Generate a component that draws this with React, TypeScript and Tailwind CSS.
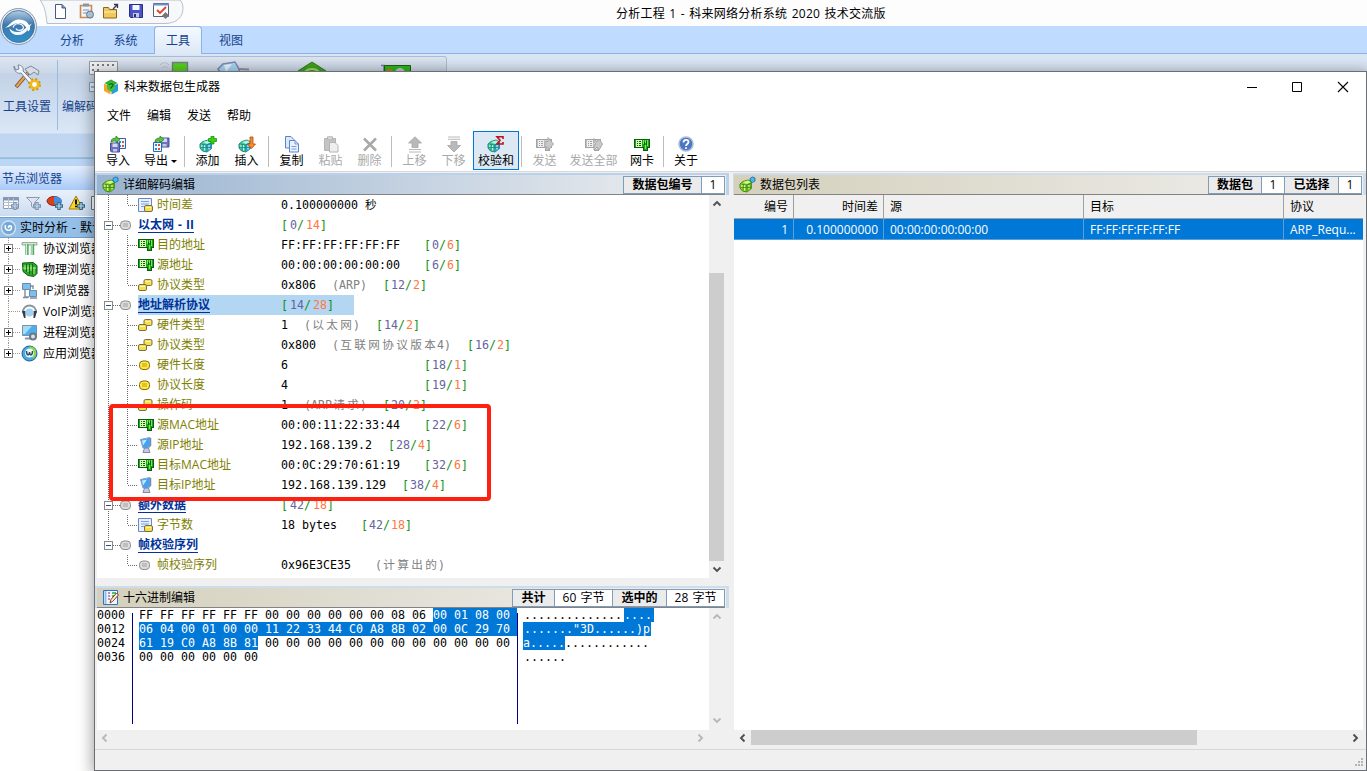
import React from "react";

const UI = "font-['Open_Sans','Noto_Sans_CJK_SC',sans-serif] [word-spacing:1px]";
const MONO = "font-['DejaVu_Sans_Mono','Noto_Sans_CJK_SC',monospace] [word-spacing:0px]";

/* ---------- small icons ---------- */

function Gem({ x = 0, y = 0, tone = "teal" }: { x?: number; y?: number; tone?: "teal" | "green" }) {
  const c =
    tone === "teal"
      ? ["#b4f5da", "#3fd0a0", "#2f9ad8", "#157a78"]
      : ["#d2f88a", "#8cdc34", "#5db01c", "#3a7a0c"];
  return (
    <g transform={`translate(${x} ${y})`} strokeWidth=".9" stroke={c[3]} strokeLinejoin="round">
      <path d="M3 1.500 8 0l3.500 2v6.500L7 12 2.500 11 0 8V4z" fill={c[1]} />
      <path d="M7 4.500 11.500 2v6.500L7 12z" fill={c[2]} stroke="none" />
      <path d="M3 2 8 .600l3 1.600L7 4z" fill={c[0]} stroke="none" />
      <path d="M2 5v3M4.500 5v5.500M9 5v4.500" stroke={c[0]} strokeWidth="1.300" fill="none" />
      <path d="M3.200 4v6.500M6.300 4.500V11.500M.5 7.500h10.500M1.500 4l5 1 4.500-2" fill="none" strokeWidth=".7" />
    </g>
  );
}

function Card({ gray = false, x = 0, y = 0 }: { gray?: boolean; x?: number; y?: number }) {
  const a = gray ? "#c0c0c0" : "#23a51a";
  const b = gray ? "#a2a2a2" : "#0b5c12";
  const l = gray ? "#efefef" : "#d4ffb0";
  return (
    <g transform={`translate(${x} ${y})`} shapeRendering="crispEdges">
      <path d="M0 0h16v9h-2v3H9V9H0z" fill={b} />
      <path d="M1 1h14v7h-2v3h-3V8H1z" fill={a} />
      <path d="M2 1h6v7H2z" fill={l} />
      <path d="M3 2h1v1H3zM5 2h2v1H5zM3 4h1v1H3zM5 4h2v1H5zM3 6h1v1H3zM5 6h2v1H5z" fill={b} />
      <path d="M9 1h1v4H9zM11 1h1v3h-1zM13 1h1v6h-1zM11 6h1v4h-1z" fill={gray ? "#e4e4e4" : "#6cf048"} />
      <path d="M10 3h1v3h-1zM12 2h1v4h-1z" fill={b} />
    </g>
  );
}

function Disk({ x, y }: { x: number; y: number }) {
  return (
    <g transform={`translate(${x} ${y})`}>
      <path d="M.5.500h9v9h-8l-1-1z" fill="#6c72c0" stroke="#4a4e98" />
      <path d="M2.500 1h5v3.500h-5z" fill="#d4d8f4" />
      <path d="M3 6.500h4V9H3z" fill="#c4c8e8" />
    </g>
  );
}

function ToolIcon({ kind }: { kind: string }) {
  return (
    <svg width="18" height="17" viewBox="0 0 18 17" fill="none" className="block">
      {kind === "import" && (
        <g>
          <path d="M8.500 2.500h8v10h-8z" fill="#f2f8ff" stroke="#2a64b4" />
          <path d="M10 5h2v2h-2zM10 9h2v2h-2z" fill="#2a8de0" />
          <path d="M13 5h2v2h-2zM13 9h2v2h-2z" fill="#e45a1c" />
          <Disk x={1} y={6.500} />
          <path d="M2 6c0-3 2-4 5-4V0l4 3.500L7 7V5C5 5 4 5 2 6z" fill="#5cc440" stroke="#1b7a1b" strokeWidth=".7" />
        </g>
      )}
      {kind === "export" && (
        <g>
          <Disk x={7.500} y={1.500} />
          <path d="M1.500 6.500h8v9h-8z" fill="#f2f8ff" stroke="#1e6cc0" />
          <path d="M3 8h2v2H3zM3 12h2v2H3z" fill="#2a8de0" />
          <path d="M6 8h2v2H6zM6 12h2v2H6z" fill="#e0501c" />
          <path d="M3 6c0-3 2-4 5-4V0l4 3.500L8 7V5C6 5 5 5 3 6z" fill="#5cc440" stroke="#1b7a1b" strokeWidth=".7" />
        </g>
      )}
      {kind === "add" && (
        <g>
          <Gem x={1} y={4} />
          <path d="M12 0h3v2.500h2.500v3H15V8h-3V5.500H9.500v-3H12z" fill="#35d018" stroke="#128a08" strokeWidth=".7" />
        </g>
      )}
      {kind === "insert" && (
        <g>
          <Gem x={1} y={4} />
          <path d="M12 1h3v7h2.500L13.500 12.500 9.500 8H12z" fill="#f98a24" stroke="#b8480c" strokeWidth=".8" />
        </g>
      )}
      {kind === "copy" && (
        <g stroke="#5a84cc" strokeLinejoin="round">
          <path d="M2.500.500H8l3 3v8.500H2.500z" fill="#dbe8fb" />
          <path d="M6.500 4.500H12l3.500 3.500v8h-9z" fill="#e9f2ff" />
          <path d="M12 4.500V8h3.500M8.500 10.500h5M8.500 13h5" strokeWidth=".8" />
        </g>
      )}
      {kind === "paste" && (
        <g stroke="#b4b4b4">
          <path d="M2.500 2.500h11v12h-11z" fill="#c4c4c4" />
          <path d="M5.500.800h5v3h-5z" fill="#dadada" />
          <path d="M7.500 6.500H13l3 3v6.500H7.500z" fill="#efefef" />
        </g>
      )}
      {kind === "delete" && <path d="m3 2.500 12 12M15 2.500l-12 12" stroke="#a9a9a9" strokeWidth="2.600" />}
      {kind === "up" && (
        <g fill="#b9b9b9" stroke="#a6a6a6" strokeWidth=".8">
          <path d="M9 .8 15.500 7h-3.500v4.500H6V7H2.500z" />
          <path d="M3 13.500h12M3 16h12" />
        </g>
      )}
      {kind === "down" && (
        <g fill="#b9b9b9" stroke="#a6a6a6" strokeWidth=".8">
          <path d="M9 16 15.500 9.500h-3.500V5.500H6v4H2.500z" />
          <path d="M3 1h12M3 3.300h12" />
        </g>
      )}
      {kind === "sum" && (
        <g>
          <Gem x={1} y={4} />
          <path d="M16 3V.800h-6L13 4.300 10 8h6V6" stroke="#c01020" strokeWidth="1.600" />
        </g>
      )}
      {kind === "send" && (
        <g>
          <Card gray y={3} />
          <path d="M9 5.500h3v-4L17.500 8 12 14.500V11H9z" fill="#c9c9c9" stroke="#a8a8a8" />
        </g>
      )}
      {kind === "sendall" && (
        <g>
          <Card gray y={3} />
          <path d="M9 2.500 12 6l2-3 3.500 5-3.500 6-2-3-3 3V10l2-2-2-2z" fill="#c9c9c9" stroke="#a8a8a8" />
        </g>
      )}
      {kind === "card" && <Card x={1} y={3} />}
      {kind === "about" && (
        <g>
          <circle cx="9" cy="8" r="7" fill="#4a76c4" stroke="#aebcd8" strokeWidth="1.600" />
          <path d="M6.500 6.500C6.500 3 11.500 3 11.500 6c0 2-2.500 2-2.500 4M9 11.300V13" stroke="#fff" strokeWidth="1.800" />
        </g>
      )}
    </svg>
  );
}

/* ---------- toolbar ---------- */

function Tool({ kind, label, w, off = false, arrow = false }: { kind: string; label: string; w: string; off?: boolean; arrow?: boolean }) {
  return (
    <div className={`flex shrink-0 flex-col items-center pt-[4px] ${w}`}>
      <ToolIcon kind={kind} />
      <div className={`flex h-4 items-center whitespace-nowrap text-[12px] leading-4 ${off ? "text-[#a9a9a9]" : "text-black"}`}>
        {label}
        {arrow && <span className="ml-[3px] border-x-[3px] border-t-[3px] border-x-transparent border-t-black" />}
      </div>
    </div>
  );
}

function Sep({ m }: { m: string }) {
  return <div className={`mt-[4px] h-[31px] w-px shrink-0 bg-[#bcbcbc] ${m}`} />;
}

function Toolbar() {
  return (
    <div className="flex h-[40px] shrink-0 pl-[4px] pt-px">
      <Tool kind="import" label="导入" w="w-[38px]" />
      <Tool kind="export" label="导出" w="w-[47px]" arrow />
      <Sep m="" />
      <Tool kind="add" label="添加" w="w-[39px] ml-[3px]" />
      <Tool kind="insert" label="插入" w="w-[39px]" />
      <Sep m="ml-[2px]" />
      <Tool kind="copy" label="复制" w="w-[39px] ml-[3px]" />
      <Tool kind="paste" label="粘贴" w="w-[39px]" off />
      <Tool kind="delete" label="删除" w="w-[39px]" off />
      <Sep m="ml-[2px]" />
      <Tool kind="up" label="上移" w="w-[39px] ml-[3px]" off />
      <Tool kind="down" label="下移" w="w-[39px]" off />
      <div className="flex h-[39px] w-[46px] shrink-0 justify-center border border-[#0078d7] bg-[#dce9f5] -mt-px">
        <Tool kind="sum" label="校验和" w="w-[44px]" />
      </div>
      <Sep m="ml-[2px]" />
      <Tool kind="send" label="发送" w="w-[39px] ml-[3px]" off />
      <Tool kind="sendall" label="发送全部" w="w-[59px]" off />
      <Tool kind="card" label="网卡" w="w-[38px]" />
      <Sep m="ml-[2px]" />
      <Tool kind="about" label="关于" w="w-[40px] ml-[2px]" />
    </div>
  );
}

/* ---------- pane header ---------- */

function PacketGlyph() {
  return (
    <svg width="18" height="17" viewBox="0 0 18 17">
      <Gem x={1} y={4} tone="green" />
      <path d="m11 2.500 2.500-1.500 2.500 1v3L13.500 6.500 11 5z" fill="#48b8f0" stroke="#17649c" strokeWidth=".8" />
    </svg>
  );
}

function NoteGlyph() {
  return (
    <svg width="18" height="17" viewBox="0 0 18 17" fill="none">
      <path d="M1.500 1.500h14v14h-14z" fill="#f2f7ff" stroke="#2c74cc" />
      <path d="M3.500 2v13" stroke="#8dbcf4" strokeWidth="2" />
      <path d="M6 4h2M6 7h2M6 10h2" stroke="#7a2860" />
      <path d="M10 4h4M10 7h4" stroke="#1fae2e" strokeWidth="1.400" />
      <path d="m8 14 1-3.500L14.500 4l2 2-6 6.500z" fill="#fff3c8" stroke="#8a3418" />
    </svg>
  );
}

function Badges({ items }: { items: [string, string, string, string][] }) {
  return (
    <div className="flex h-[18px] border border-[#7f9db9] bg-[#7f9db9] gap-px text-[12px] leading-[16px] text-black">
      {items.map(([k, kw, v, vw]) => (
        <React.Fragment key={k}>
          <div className={`bg-[#ebebeb] text-center font-bold ${kw}`}>{k}</div>
          <div className={`bg-white text-center ${vw}`}>{v}</div>
        </React.Fragment>
      ))}
    </div>
  );
}

function PaneHeader({ title, grad, edge, icon, badges }: { title: string; grad: string; edge: string; icon: React.ReactNode; badges: [string, string, string, string][] }) {
  return (
    <div className={`flex h-[22px] shrink-0 flex-col border-r-[3px] border-t-2 pr-px ${edge}`}>
      <div className={`flex h-[20px] items-center border-b border-[#848284] pl-[5px] ${grad}`}>
        {icon}
        <span className="ml-[3px] flex-1 text-[12px] leading-[18px] text-black">{title}</span>
        <Badges items={badges} />
      </div>
    </div>
  );
}

/* ---------- decode tree ---------- */

type Row = {
  group?: boolean;
  last?: boolean;
  noRoot?: boolean;
  icon: "note" | "gray" | "card" | "pair" | "one" | "host";
  label: string;
  value?: string;
  noteX?: number;
  note?: string;
  pairX?: number;
  pair?: [string, string];
  sel?: boolean;
};

const rows: Row[] = [
  { icon: "note", label: "时间差", value: "0.100000000 秒", last: true },
  { group: true, icon: "gray", label: "以太网 - II", pairX: 0, pair: ["0", "14"] },
  { icon: "card", label: "目的地址", value: "FF:FF:FF:FF:FF:FF", pairX: 143, pair: ["0", "6"] },
  { icon: "card", label: "源地址", value: "00:00:00:00:00:00", pairX: 143, pair: ["6", "6"] },
  { icon: "pair", label: "协议类型", value: "0x806", noteX: 51, note: "(ARP)", pairX: 102, pair: ["12", "2"], last: true },
  { group: true, icon: "gray", label: "地址解析协议", pairX: 0, pair: ["14", "28"], sel: true },
  { icon: "pair", label: "硬件类型", value: "1", noteX: 23, note: "(以太网)", pairX: 95, pair: ["14", "2"] },
  { icon: "pair", label: "协议类型", value: "0x800", noteX: 51, note: "(互联网协议版本4)", pairX: 186, pair: ["16", "2"] },
  { icon: "one", label: "硬件长度", value: "6", pairX: 143, pair: ["18", "1"] },
  { icon: "one", label: "协议长度", value: "4", pairX: 143, pair: ["19", "1"] },
  { icon: "pair", label: "操作码", value: "1", noteX: 23, note: "(ARP请求)", pairX: 102, pair: ["20", "2"] },
  { icon: "card", label: "源MAC地址", value: "00:00:11:22:33:44", pairX: 143, pair: ["22", "6"] },
  { icon: "host", label: "源IP地址", value: "192.168.139.2", pairX: 107, pair: ["28", "4"] },
  { icon: "card", label: "目标MAC地址", value: "00:0C:29:70:61:19", pairX: 143, pair: ["32", "6"] },
  { icon: "host", label: "目标IP地址", value: "192.168.139.129", pairX: 121, pair: ["38", "4"], last: true },
  { group: true, icon: "gray", label: "额外数据", pairX: 0, pair: ["42", "18"] },
  { icon: "note", label: "字节数", value: "18 bytes", pairX: 80, pair: ["42", "18"], last: true },
  { group: true, icon: "gray", label: "帧校验序列", noRoot: true },
  { icon: "gray", label: "帧校验序列", value: "0x96E3CE35", noteX: 94, note: "(计算出的)", last: true, noRoot: true },
];

function Pill({ x, y, gray = false }: { x: number; y: number; gray?: boolean }) {
  return (
    <g transform={`translate(${x} ${y})`}>
      <rect x=".5" y=".5" width="10" height="8.500" rx="3.500" fill={gray ? "#dcdcdc" : "#ffe84a"} stroke={gray ? "#8f8f8f" : "#8a6d00"} />
      <path d="M3 3.500h5M3 5.500h5" stroke={gray ? "#9a9a9a" : "#b89200"} strokeWidth=".9" />
    </g>
  );
}

function MiniPill({ x, y }: { x: number; y: number }) {
  return (
    <g transform={`translate(${x} ${y})`}>
      <rect x=".5" y=".5" width="8" height="6" rx="1.500" fill="#f8de4a" stroke="#77704c" />
      <path d="M2 2.500h5" stroke="#fff6a8" />
    </g>
  );
}

function Branch({ r }: { r: Row }) {
  const dot = { stroke: "#6a6a6a", strokeDasharray: "1 1", fill: "none" };
  return (
    <svg width={r.group ? 41 : 60} height="20" viewBox={r.group ? "0 0 41 20" : "0 0 60 20"} className="block shrink-0">
      {!(r.noRoot && !r.group) && <path d={r.noRoot ? "M11.500 0v10" : "M11.500 0v20"} {...dot} />}
      {r.group ? (
        <g>
          <path d="M16 10.500h8" {...dot} />
          <rect x="7.500" y="6.500" width="8" height="8" fill="#fff" stroke="#8a8a8a" />
          <path d="M9 10.500h5" stroke="#2c4a8a" />
          <Pill x={23} y={5.500} gray />
        </g>
      ) : (
        <g>
          <path d={r.last ? "M30.500 0v10" : "M30.500 0v20"} {...dot} />
          <path d="M31 10.500h10" {...dot} />
          {r.icon === "gray" && <Pill x={42} y={5.500} gray />}
          {r.icon === "one" && <Pill x={42} y={5.500} />}
          {r.icon === "card" && <Card x={41} y={4} />}
          {r.icon === "pair" && (
            <g>
              <MiniPill x={46.500} y={4} />
              <MiniPill x={41} y={9} />
            </g>
          )}
          {r.icon === "note" && (
            <g>
              <path d="M41.500 3.500h13v13h-13z" fill="#e8f1ff" stroke="#6a86c4" />
              <path d="M44 6.500h8M44 9h8M44 11.500h5" stroke="#7aa0dc" />
              <MiniPill x={47} y={10} />
            </g>
          )}
          {r.icon === "host" && (
            <g>
              <path d="m43.500 4.500 9.500-2v9.500l-7 1z" fill="#3fa4f8" stroke="#8c9cb8" />
              <path d="m45 5.500 5-1-4 6z" fill="#c4e6ff" />
              <path d="M53.500 3v8" stroke="#7c88b0" strokeWidth="1.500" />
              <path d="M47.500 13h4l1.500 4.500h-7z" fill="#c4cae4" stroke="#6b7298" strokeWidth=".8" />
            </g>
          )}
        </g>
      )}
    </svg>
  );
}

function Pair({ p, group }: { p: [string, string]; group?: boolean }) {
  const g = group ? "ml-[2px]" : "ml-[1px]";
  return (
    <span className="text-[#109010]">
      [<span className={`text-[#6464a0] ${g}`}>{p[0]}</span>/<span className={`text-[#ff7840] ${g}`}>{p[1]}</span>]
    </span>
  );
}

function DecodeRow({ r }: { r: Row }) {
  const before = r.note ? r.noteX! : r.pairX ?? 110;
  return (
    <div className="flex h-[20px] shrink-0">
      <Branch r={r} />
      <div className={`flex h-[20px] items-center ${r.sel ? "w-[216px] bg-[#b3d7f3]" : ""}`}>
        <div className={`shrink-0 text-[12px] leading-[16px] ${r.group ? "w-[143px] font-bold text-[#003399]" : "w-[124px] text-[#808000]"}`}>
          <span className={r.group ? "inline-block border-b border-[#003399] leading-[15px]" : ""}>{r.label}</span>
        </div>
        <div className={`flex whitespace-pre text-[11.63px] leading-[20px] ${MONO}`}>
          <span className="shrink-0 text-black" style={{ width: before }}>
            {r.value}
          </span>
          {r.note && (
            <span className="shrink-0 text-[#808080]" style={{ width: (r.pairX ?? 180) - before }}>
              {Array.from(r.note).map((ch, i) => (
                <span key={i} className={ch.charCodeAt(0) > 255 ? "inline-block w-[14px] text-center" : ""}>
                  {ch}
                </span>
              ))}
            </span>
          )}
          {r.pair && <Pair p={r.pair} group={r.group} />}
        </div>
      </div>
    </div>
  );
}

/* ---------- scroll arrows ---------- */

function Chevron({ d, c = "#505050" }: { d: "up" | "down" | "left" | "right"; c?: string }) {
  const p = { up: "m4.500 9.500 3.500-3.500L11.500 9.500", down: "m4.500 6.500 3.500 3.500 3.500-3.500", left: "M9.500 4.500 6 8l3.500 3.500", right: "m6.500 4.500 3.500 3.500-3.500 3.500" };
  return (
    <svg width="16" height="16" viewBox="0 0 16 16" className="block shrink-0">
      <path d={p[d]} fill="none" stroke={c} strokeWidth="1.900" />
    </svg>
  );
}

/* ---------- hex editor ---------- */

const Z = (n: number) => Array(n).fill("00").join(" ");

function Sel({ children, m = "" }: { children: React.ReactNode; m?: string }) {
  return <span className={`inline-block h-[14px] bg-[#0078d7] text-white ${m}`}>{children}</span>;
}

function HexPane() {
  return (
    <div className="flex h-[122px] shrink-0 bg-[#f0f0f0]">
      <div className={`flex flex-1 bg-white text-[11.63px] leading-[14px] whitespace-pre text-black ${MONO}`}>
        <div className="w-[35px] shrink-0">
          {["0000", "0012", "0024", "0036"].map((o) => (
            <div key={o}>{o}</div>
          ))}
        </div>
        <div className="mt-[5px] h-[111px] w-px shrink-0 bg-[#000080]" />
        <div className="ml-[5px] w-[379px] shrink-0 pl-px">
          <div className="h-[14px]">
            {"FF FF FF FF FF FF " + Z(6) + " 08 06 "}
            <Sel>{"00 01 08 00 "}</Sel>
          </div>
          <div className="h-[14px]">
            <Sel>{"06 04 00 01 00 00 11 22 33 44 C0 A8 8B 02 00 0C 29 70 "}</Sel>
          </div>
          <div className="h-[14px]">
            <Sel>61 19 C0 A8 8B 81</Sel> {Z(12)}
          </div>
          <div className="h-[14px]">{Z(6)}</div>
        </div>
        <div className="mt-[5px] h-[111px] w-px shrink-0 bg-[#000080]" />
        <div className="ml-[5px]">
          <div className="h-[14px] pl-[1px]">
            ..............<Sel m="ml-[2px] pr-[2px]">....</Sel>
          </div>
          <div className="h-[14px]">
            <Sel m="pl-px pr-px">......."3D......)p</Sel>
          </div>
          <div className="h-[14px]">
            <Sel>a.....</Sel>............
          </div>
          <div className="h-[14px] pl-px">......</div>
        </div>
      </div>
      <div className="flex w-[19px] shrink-0 flex-col justify-between pb-[2px] pt-px">
        <Chevron d="up" c="#b8b8b8" />
        <Chevron d="down" c="#b8b8b8" />
      </div>
    </div>
  );
}

/* ---------- packet list ---------- */

function PacketList() {
  const cols = ["w-[59px] text-right pr-[5px]", "w-[89px] text-right pr-[5px]", "w-[199px] pl-[6px]", "w-[199px] pl-[6px]", "w-[79px] pl-[6px]"];
  const head = ["编号", "时间差", "源", "目标", "协议"];
  const data = ["1", "0.100000000", "00:00:00:00:00:00", "FF:FF:FF:FF:FF:FF", "ARP_Requ..."];
  return (
    <div className="flex flex-1 flex-col text-[12px]">
      <div className="flex h-[24px] w-[629px] gap-px border-b border-[#a0a0a0] bg-[#a0a0a0] leading-[24px] text-black">
        {head.map((h, i) => (
          <div key={h} className={`shrink-0 bg-[#f0f0f0] ${cols[i]}`}>
            {h}
          </div>
        ))}
      </div>
      <div className="flex h-[21px] w-[629px] gap-px border-b border-[#5a9fd6] bg-[#5a9fd6] leading-[22px] text-white">
        {data.map((h, i) => (
          <div key={i} className={`shrink-0 whitespace-nowrap bg-[#0078d7] ${cols[i]}`}>
            {h}
          </div>
        ))}
      </div>
    </div>
  );
}

/* ---------- main window behind ---------- */

function Orb() {
  return (
    <svg width="40" height="40" viewBox="0 0 40 40" className="absolute -left-px top-[7px]">
      <defs>
        <linearGradient id="orb" x1="0" y1="0" x2="0" y2="1">
          <stop offset="0" stopColor="#b4cce2" />
          <stop offset=".45" stopColor="#3f78ac" />
          <stop offset="1" stopColor="#2f90cc" />
        </linearGradient>
      </defs>
      <circle cx="19.500" cy="19.500" r="18" fill="#e4ecf4" stroke="#8898ac" />
      <circle cx="19.500" cy="19.500" r="16" fill="url(#orb)" stroke="#3a6a98" strokeWidth=".8" />
      <path d="M6 20.500c4-1 6-7 13-8 6-.8 11 3 12 8 .5 2-1 3.500-2 4-1-4-4-8-9-8.500-6-.5-8 5-14 4.500z" fill="#fff" />
      <path d="M33 16.500c-2 2-5 11-13 11.500-6 .5-9-3-9.500-6.500 2 2 5 4 9 3.500 6-.7 8-6.500 13.500-8.500z" fill="#f2f8fd" />
      <path d="M14 20.500c1-3 4-4.500 7-3.500 3 .8 4 3 3 5-2 2-6 2-7-.5" stroke="#fff" strokeWidth="1.200" fill="none" />
    </svg>
  );
}

function QuickBar() {
  return (
    <svg width="190" height="26" viewBox="0 0 190 26" fill="none">
      <path d="M40 0c4 5 6 12 7 23.500h118c12 0 18-7 18-15 0-4-1-6-3-8.500z" fill="#f7f8fa" stroke="#b9bfc8" />
      <path d="M55.500 4.500H62l3.500 3.500v10.500h-10z" fill="#fff" stroke="#4b5a7c" />
      <path d="M62 4.500V8h3.500" fill="#7e92b8" stroke="#4b5a7c" />
      <g transform="translate(0 1)">
        <path d="M80.500 4.500h11v12h-11z" fill="#f4f4f8" stroke="#c88a54" strokeWidth="1.600" />
        <path d="M83 2.500h6v3h-6z" fill="#8d96a8" />
        <path d="M83 9h6M83 12h4" stroke="#7a8fb8" />
        <circle cx="90" cy="13.500" r="3.500" fill="#a7c0d4" stroke="#60788e" />
      </g>
      <g transform="translate(0 1)">
        <path d="M103.500 6.500h5l1 2h7v8.500h-13z" fill="#f0c860" stroke="#8a661c" />
        <path d="M104 11h12" stroke="#fff1b0" />
        <path d="m113 8 4-4M114 3.500h3.500V7" stroke="#303c50" strokeWidth="1.300" />
      </g>
      <g>
        <path d="M129.500 4.500h13v13h-12l-1-1z" fill="#4a54c4" stroke="#262c84" />
        <path d="M132.500 5h7v5h-7z" fill="#f4f6ff" />
        <path d="M133 13h6v4.500h-6z" fill="#c4c9e4" />
        <path d="M134 14h2v3h-2z" fill="#262c84" />
      </g>
      <g>
        <path d="M153.500 3.500h15v13h-15z" fill="#fff" stroke="#5a6078" />
        <path d="M153 4.500h16" stroke="#6f8fd0" strokeWidth="2" />
        <path d="m157 10 3 3 6-6" stroke="#e04428" strokeWidth="1.900" />
        <path d="m165.500 12 3.500 3.500-3.500 3.500-3.500-3.500z" fill="#777" />
      </g>
    </svg>
  );
}

function RibbonArt() {
  return (
    <svg width="380" height="34" viewBox="0 0 380 34" fill="none">
      <path d="M31.500 3.500h28v13h-28z" fill="#f3f3f3" stroke="#909aa6" />
      <path d="M34 6h2v2h-2zM39 6h2v2h-2zM44 6h2v2h-2zM49 6h2v2h-2zM54 6h2v2h-2zM34 11h2v2h-2zM39 11h2v2h-2z" fill="#757e8c" />
      <path d="M31.500 24.500h8v9h-8z" fill="#eef4fb" stroke="#7f9cc0" />
      <path d="M33 29h4" stroke="#3d78c0" />
      <path d="M102 7c3-3 6-3 9 0M104 10c2-2 4-2 6 0" stroke="#b6c2cf" />
      <path d="M114.500 4.500h15v14h-15z" fill="#57d31c" stroke="#777f88" strokeWidth="1.400" />
      <path d="m160 11 5-5 12-2 4 7 1 6h-18z" fill="#a8d8f8" stroke="#8088b4" strokeWidth="1.500" />
      <path d="m166 7 8-1-6 8z" fill="#eaf7ff" />
      <path d="m180 11 11 .5" stroke="#8d93a8" strokeWidth="2" />
      <path d="m240 13 14-9 14 9-14 8z" fill="#3fa321" stroke="#2f7d1d" />
      <path d="M247 14c3-4 11-4 14 0" stroke="#a0e060" strokeWidth="2" />
      <path d="M323 7.500h3V20" stroke="#7579a8" strokeWidth="1.500" />
      <path d="M326.500 7.500h26v12h-26z" fill="#2fb81c" stroke="#20600e" />
      <path d="M329 11h5v3h-5z" fill="#ec6a20" />
      <circle cx="342" cy="15" r="5" fill="#bccbd0" />
    </svg>
  );
}

function WrenchIcon() {
  return (
    <svg width="32" height="32" viewBox="0 0 32 32" fill="none">
      <path d="m5 25 12-14" stroke="#8a5a24" strokeWidth="4" />
      <path d="m5.500 24.500 11-13" stroke="#e2a458" strokeWidth="2" />
      <path d="m14 7 6-3 8 5-1 4-4-3-4 3z" fill="#d6dde6" stroke="#7e8896" />
      <path d="M3 4c0 6 4 8 7 7l10 12 3-3L12 9c1-3-1-6-5-6l1 4-3 1z" fill="#f0f4fa" stroke="#7685a0" />
      <circle cx="23.500" cy="22.500" r="3.800" stroke="#f0b81c" strokeWidth="2.800" fill="#fff" />
      <circle cx="23.500" cy="22.500" r="5.600" stroke="#d09a10" strokeDasharray="2.200 2.200" strokeWidth="1.800" />
    </svg>
  );
}

function SideTools() {
  const plus = (x: number, c: string) => (
    <g>
      <path d={`M${x} 8v8M${x - 4} 12h8`} stroke={c} strokeWidth="3.400" />
      <path d={`M${x} 9v6M${x - 3} 12h6`} stroke="#c4dcec" strokeWidth="1.200" />
    </g>
  );
  return (
    <svg width="95" height="20" viewBox="0 0 95 20" fill="none">
      <path d="M3.500 3.500h15v11h-15z" fill="#fff" stroke="#8c9bb0" />
      <path d="M3 5h16" stroke="#8396b4" strokeWidth="3" />
      <path d="M3 8.500h16M3 11.500h16M8.500 4v11M13.500 4v11" stroke="#b4bfce" />
      {plus(15, "#7c93b4")}
      <path d="M26.500 3.500h13l-5 5v6l-3-2v-4z" fill="#dfe5ee" stroke="#8c9bb0" />
      {plus(37, "#7c93b4")}
      <ellipse cx="54" cy="7" rx="7" ry="4.500" fill="#d8401c" stroke="#8a2410" />
      <path d="M54 7V2.500c5 0 8 2 8 5s-3 4-7 4z" fill="#4a8de0" />
      {plus(59, "#2d6a8a")}
      <path d="M76 2 83 15H69z" fill="#fcd428" stroke="#a67c00" />
      <path d="M76 5.500v5M76 11.800v1.500" stroke="#000" strokeWidth="1.800" />
      {plus(81, "#2d6a8a")}
      <path d="M91.500 2.500h6v13h-6z" fill="#fff" stroke="#5a7890" />
    </svg>
  );
}

function NodeIcon({ k }: { k: number }) {
  return (
    <svg width="17" height="17" viewBox="0 0 17 17" fill="none">
      {k === 0 && (
        <g>
          <path d="M1 2.500h15v2.500H1z" fill="#cfe8cf" stroke="#82a08a" strokeWidth=".8" />
          <path d="M6 4v11M11.500 4v11" stroke="#5aa868" strokeWidth="3.400" />
          <path d="M5.500 4v11M11 4v11" stroke="#d2f2d6" strokeWidth="1.200" />
        </g>
      )}
      {k === 1 && (
        <g>
          <path d="M1.500 2 12 1.500l4 3v8l-3 3-6-1-5-4z" fill="#2ba428" stroke="#0e5f12" />
          <path d="M4 4v5M7 4v7M10 4v6M13 6v7M2 7h13" stroke="#a6ec88" />
          <path d="M5.500 3v8M8.500 3v10M11.500 3v11" stroke="#0e5f12" strokeWidth=".8" />
        </g>
      )}
      {k === 2 && (
        <g>
          <path d="M1.500 1.500h8v6h-8zM8.500 8.500h7v6h-7z" fill="#7cc0ec" stroke="#6c8ab0" />
          <path d="M4 8v7h4M12 7V4h-2M2 15.500h5M9 16h7" stroke="#808c9c" strokeWidth="1.400" />
        </g>
      )}
      {k === 3 && (
        <g>
          <path d="M2 10C1 0 16 0 15 10" stroke="#8c97a4" strokeWidth="2" />
          <path d="M1 8h3.500v7H3zM12.500 8H16l-2 7h-1.500z" fill="#343c48" />
          <circle cx="8.500" cy="9.500" r="4" fill="#9fd2f2" />
        </g>
      )}
      {k === 4 && (
        <g>
          <path d="M1.500 1.500h14v10h-14z" fill="#4cb0ee" stroke="#7890a8" />
          <path d="M2 2h9l-7 8H2z" fill="#a4dcfa" />
          <path d="M4 14.500h6" stroke="#8898a8" strokeWidth="2" />
          <circle cx="12" cy="12.500" r="3" stroke="#6c7884" strokeWidth="2" fill="#dde" />
        </g>
      )}
      {k === 5 && (
        <g>
          <circle cx="8.500" cy="8.500" r="7.500" fill="#45a8e8" stroke="#1c5c98" />
          <path d="M8 1.500C14 1 16 6 15 10l-3 4-2-6z" fill="#8ad848" />
          <circle cx="8.500" cy="8" r="4.500" fill="#f0f8f0" />
          <path d="M5.500 6c0 5 3 5 3 1 0 4 3 4 3-1" stroke="#2a4868" strokeWidth="1.500" />
        </g>
      )}
    </svg>
  );
}

function MainWindow() {
  const nodes = ["协议浏览器", "物理浏览器", "IP浏览器（", "VoIP浏览器", "进程浏览器", "应用浏览器"];
  return (
    <div className="relative flex h-[771px] w-[1367px] flex-col overflow-hidden bg-white text-[12px]">
      <div className="flex h-[26px] shrink-0 bg-[#fdfdfe]">
        <QuickBar />
        <div className="ml-[426px] whitespace-nowrap leading-[27px] tracking-[0.25px] text-black">分析工程 1 - 科来网络分析系统 2020 技术交流版</div>
      </div>
      <div className="flex h-[28px] shrink-0 border-b border-[#8db2e3] bg-[#bfdbff] pl-[45px] leading-[29px] text-[#15428b]">
        <div className="w-[54px] text-center">分析</div>
        <div className="w-[53px] text-center">系统</div>
        <div className="-mb-px ml-[2px] w-[48px] rounded-t-[4px] border border-b-0 border-[#8db2e3] bg-gradient-to-b from-[#f4f9ff] to-[#dde9f7] text-center leading-[27px]">工具</div>
        <div className="ml-[2px] w-[54px] text-center">视图</div>
      </div>
      <div className="flex h-[104px] shrink-0 bg-[#dbe7f5] pt-[2px]">
        <div className="flex h-[102px] w-[447px] overflow-hidden rounded-tr-[3px] border-b border-r border-t border-[#a8bfda] bg-[linear-gradient(to_bottom,#dde5f0_0,#cbd7e7_16px,#c3d2e6_17px,#d9e7f6_76px,#bfd5f0_77px,#c3d9f1_100%)]">
          <div className="flex w-[57px] shrink-0 flex-col items-center">
            <div className="mt-[5px] -ml-[4px]"><WrenchIcon /></div>
            <div className="mt-[4px] -ml-[3px] whitespace-nowrap leading-[18px] text-[#15428b]">工具设置</div>
          </div>
          <div className="mt-[3px] h-[70px] w-px shrink-0 bg-[#93bce8]" />
          <div className="mt-px flex shrink-0 flex-col">
            <RibbonArt />
            <span className="ml-[4px] mt-[6px] w-[36px] overflow-hidden whitespace-nowrap leading-[18px] text-[#15428b]">编解码</span>
          </div>
        </div>
      </div>
      <div className="h-[8px] shrink-0 border-t border-[#8fc0e0] bg-[#bcd6f6]" />
      <div className="h-[24px] shrink-0 bg-gradient-to-b from-[#e6f0ff] to-[#a9caf8] pl-[2px] leading-[26px] text-[#15428b]">节点浏览器</div>
      <div className="h-[26px] shrink-0 bg-gradient-to-b from-[#e9f1fb] to-[#ccdcf0] pt-[4px]">
        <SideTools />
      </div>
      <div className="mt-px flex h-[21px] shrink-0 items-center border-y border-[#6f9dcc] bg-[#94bfe8] text-black">
        <svg width="20" height="18" viewBox="0 0 20 18" fill="none">
          <circle cx="8.500" cy="9" r="7" fill="#6fa8d8" stroke="#d5dfe8" strokeWidth="1.500" />
          <path d="M5.500 6c-2 6 6 7 6 2.500C11.500 6 8.500 6 8.500 9" stroke="#fff" strokeWidth="1.600" />
        </svg>
        <span className="whitespace-pre">实时分析 - 默认</span>
      </div>
      {nodes.map((n, i) => (
        <div key={n} className="flex h-[21px] shrink-0 items-center text-black">
          <svg width="21" height="21" viewBox="0 0 21 21" fill="none">
            <path d={i === 5 ? "M8.500 0v10" : "M8.500 0v21"} stroke="#a09880" strokeDasharray="1 1" />
            <path d="M9 10.500h12" stroke="#a09880" strokeDasharray="1 1" />
            {i !== 3 && (
              <g>
                <rect x="4.500" y="6.500" width="8" height="8" fill="#fff" stroke="#808080" />
                <path d="M6 10.500h5M8.500 8v5" stroke="#000" />
              </g>
            )}
          </svg>
          <NodeIcon k={i} />
          <span className="ml-[5px] whitespace-nowrap">{n}</span>
        </div>
      ))}
      <Orb />
    </div>
  );
}

/* ---------- dialog ---------- */

function Dialog() {
  return (
    <div className="absolute left-[94px] top-[71px] flex h-[700px] w-[1273px] flex-col border border-[#6b6e73] bg-white shadow-[0_2px_14px_2px_rgba(0,0,0,0.35)]">
      <div className="flex h-[29px] shrink-0 items-center pl-[8px] pr-[16px]">
        <svg width="16" height="16" viewBox="0 0 16 16" fill="none">
          <path d="m8 .5 6.500 3.500-6.500 4L1.500 4z" fill="#2faa38" />
          <path d="M1 4.500 7.500 8v7.500L1 12z" fill="#f7a428" />
          <path d="M15 4.500 8.500 8v7.500L15 12z" fill="#289be8" />
          <path d="m4 5 4-2.500L12 5v5l-4 3-4-3z" fill="#40c038" />
          <path d="M6 6c1-2 4-1.500 4 0 0 1.500-2 1.500-2 3.500" stroke="#156c1c" strokeWidth="1.500" />
        </svg>
        <span className="ml-[5px] flex-1 text-[12px] leading-[18px] text-black">科来数据包生成器</span>
        <svg width="104" height="12" viewBox="0 0 104 12" fill="none" stroke="#000">
          <path d="M1 6.500h10" />
          <path d="M46.500 1.500h9v9h-9z" />
          <path d="m92 1 10 10M102 1 92 11" strokeWidth="1.100" />
        </svg>
      </div>
      <div className="flex h-[30px] shrink-0 gap-[16px] pl-[12px] text-[12px] leading-[30px] text-black">
        <span>文件</span>
        <span>编辑</span>
        <span>发送</span>
        <span>帮助</span>
      </div>
      <Toolbar />
      <div className="h-px shrink-0 bg-[#d8d8d8]" />
      <div className="flex h-[577px] shrink-0 bg-[#f0f0f0] pt-px">
        <div className="flex w-[634px] shrink-0 flex-col">
          <PaneHeader
            title="详细解码编辑"
            grad="bg-gradient-to-r from-[#99b4d1] to-[#f0f0f0]"
            edge="border-[#b9d1ea] border-l-2"
            icon={<PacketGlyph />}
            badges={[["数据包编号", "w-[77px]", "1", "w-[22px]"]]}
          />
          <div className="ml-[2px] flex h-[383px] shrink-0">
            <div className="flex h-[383px] w-[612px] shrink-0 flex-col overflow-hidden bg-white">
              {rows.map((r, i) => (
                <DecodeRow key={i} r={r} />
              ))}
            </div>
            <div className="flex w-[15px] shrink-0 flex-col pb-px pt-px">
              <Chevron d="up" />
              <div className="mt-[61px] h-[288px] bg-[#cdcdcd]" />
              <Chevron d="down" />
            </div>
          </div>
          <div className="h-[8px] shrink-0" />
          <PaneHeader
            title="十六进制编辑"
            grad="bg-gradient-to-r from-[#d4d0bc] to-[#f0f0f0]"
            edge="border-[#cfddeb] border-l-2"
            icon={<NoteGlyph />}
            badges={[
              ["共计", "w-[41px]", "60 字节", "w-[57px]"],
              ["选中的", "w-[53px]", "28 字节", "w-[57px]"],
            ]}
          />
          <div className="ml-[2px] mr-px">
            <HexPane />
          </div>
          <div className="flex h-[16px] w-[613px] shrink-0 justify-between pl-[2px]">
            <Chevron d="left" c="#b8b8b8" />
            <Chevron d="right" c="#b8b8b8" />
          </div>
        </div>
        <div className="ml-[4px] flex flex-1 flex-col">
          <PaneHeader
            title="数据包列表"
            grad="bg-gradient-to-r from-[#d4d0bc] to-[#f0f0f0]"
            edge="border-[#cfddeb] border-l"
            icon={<PacketGlyph />}
            badges={[
              ["数据包", "w-[52px]", "1", "w-[22px]"],
              ["已选择", "w-[53px]", "1", "w-[22px]"],
            ]}
          />
          <div className="ml-px mr-[3px] flex flex-1 bg-white">
            <PacketList />
          </div>
          <div className="flex h-[16px] shrink-0 items-start pl-[2px]">
            <Chevron d="left" />
            <div className="h-[15px] w-[446px] bg-[#cdcdcd]" />
            <div className="ml-[150px]">
              <Chevron d="right" />
            </div>
          </div>
          <div className="h-[3px] shrink-0" />
        </div>
      </div>
      <div className="flex flex-1 items-end justify-end border-t border-[#d7d7d7] bg-[#f0f0f0] p-[2px]">
        <svg width="10" height="10" viewBox="0 0 10 10" fill="#b4b4b4">
          <path d="M7 0h2v2H7zM4 3h2v2H4zM7 3h2v2H7zM1 6h2v2H1zM4 6h2v2H4zM7 6h2v2H7z" />
        </svg>
      </div>
    </div>
  );
}

export default function App() {
  return (
    <div className={`relative h-[771px] w-[1367px] overflow-hidden ${UI}`}>
      <MainWindow />
      <Dialog />
      <div className="absolute left-[109px] top-[404px] h-[97px] w-[382px] rounded-[4px] border-4 border-[#ff2010]" />
    </div>
  );
}
